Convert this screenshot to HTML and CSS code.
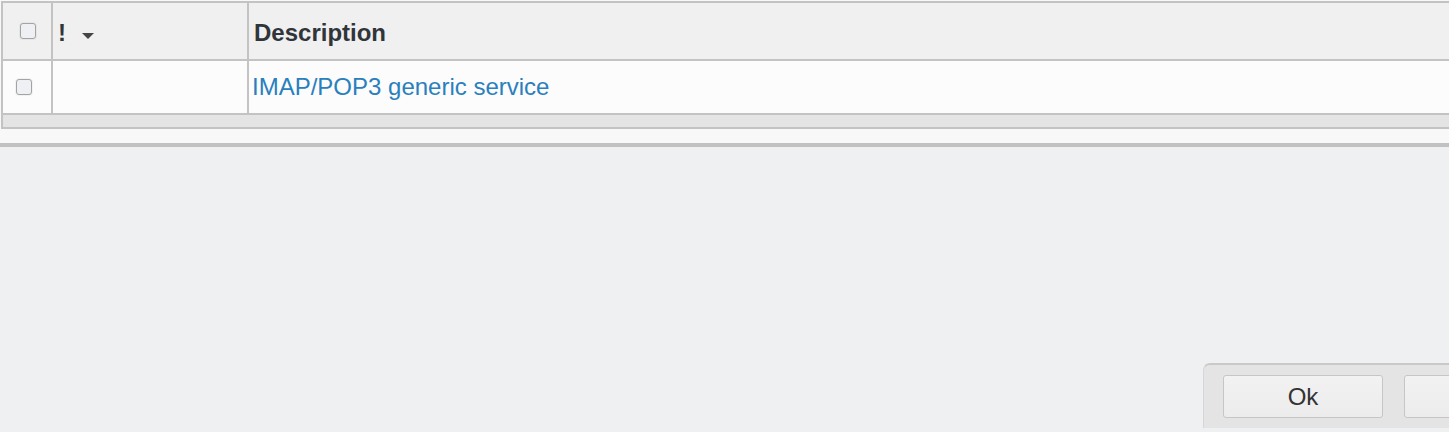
FILE: index.html
```html
<!DOCTYPE html>
<html>
<head>
<meta charset="utf-8">
<link rel="stylesheet" href="styles.css">
</head>
<body>
<div class="page">
  <div class="list-panel">
    <div class="grid">
      <div class="row head">
        <div class="cell c-check"><span class="cb cb-head"></span></div>
        <div class="cell c-flag">
          <span class="bang">!</span>
          <svg class="sort" width="14" height="8" viewBox="0 0 14 8"><path d="M1 1 H13 L7 7 Z" fill="#454545"/></svg>
        </div>
        <div class="cell c-desc"><span class="htext">Description</span></div>
      </div>
      <div class="row body">
        <div class="cell c-check"><span class="cb cb-row"></span></div>
        <div class="cell c-flag"></div>
        <div class="cell c-desc"><a class="link">IMAP/POP3 generic service</a></div>
      </div>
      <div class="strip"></div>
    </div>
  </div>
  <div class="button-bar">
    <button class="btn">Ok</button>
    <button class="btn"></button>
  </div>
</div>
</body>
</html>
```
FILE: styles.css
```css
html, body {
  margin: 0;
  padding: 0;
  height: 100%;
}
body {
  background: #eff0f2;
  font-family: "Liberation Sans", Arial, sans-serif;
  overflow: hidden;
}
.page {
  height: 432px;
  display: flex;
  flex-direction: column;
}
.list-panel {
  background: #f8f8f8;
  border-bottom: 4px solid #c1c1c1;
  padding: 1px 0 0 1px;
  box-sizing: border-box;
  height: 147px;
}
.grid {
  border: 2px solid #c3c3c3;
  border-right: none;
  width: 1500px;
}
.row {
  display: flex;
  border-bottom: 2px solid #c3c3c3;
}
.row.head {
  height: 56px;
  background: #f0f0f0;
}
.row.body {
  height: 52px;
  background: #fcfcfc;
}
.cell {
  box-sizing: border-box;
  display: flex;
  align-items: flex-start;
  font-size: 24px;
  line-height: 26px;
}
.c-check {
  width: 50px;
  border-right: 2px solid #c3c3c3;
}
.c-flag {
  width: 196px;
  border-right: 2px solid #c3c3c3;
}
.c-desc {
  flex: 1;
}
.head .cell {
  padding-top: 17px;
  color: #30353a;
  font-weight: bold;
}
.body .cell {
  padding-top: 13px;
}
.cb {
  display: block;
  width: 14px;
  height: 14px;
  border: 1px solid #a3a3a3;
  border-radius: 3px;
  background: #eef0f3;
  box-shadow: 0 0 0 1px rgba(0,0,0,0.04);
}
.cb-head {
  margin: 3px 0 0 17px;
}
.cb-row {
  margin: 5px 0 0 13px;
}
.head .c-flag {
  padding-left: 5px;
}
.bang {
  display: block;
}
.sort {
  display: block;
  margin: 12px 0 0 15px;
}
.head .c-desc {
  padding-left: 5px;
}
.body .c-desc {
  padding-left: 3px;
}
.link {
  color: #2a80bd;
  cursor: pointer;
}
.strip {
  height: 12px;
  background: #e4e4e4;
}
.button-bar {
  margin-top: auto;
  margin-bottom: 4px;
  align-self: flex-end;
  width: 246px;
  height: 65px;
  box-sizing: border-box;
  background: #e4e4e4;
  border-top: 2px solid #c9c9c9;
  border-left: 1px solid #d6d6d6;
  border-top-left-radius: 7px;
  padding: 10px 0 0 19px;
  display: flex;
  gap: 21px;
  overflow: hidden;
}
.btn {
  flex: none;
  width: 160px;
  height: 43px;
  box-sizing: border-box;
  border: 1px solid #c6c6c6;
  border-radius: 3px;
  background: linear-gradient(#f2f2f2, #ececec);
  font-family: "Liberation Sans", Arial, sans-serif;
  font-size: 24px;
  color: #333;
  padding: 0;
  margin: 0;
}
```
